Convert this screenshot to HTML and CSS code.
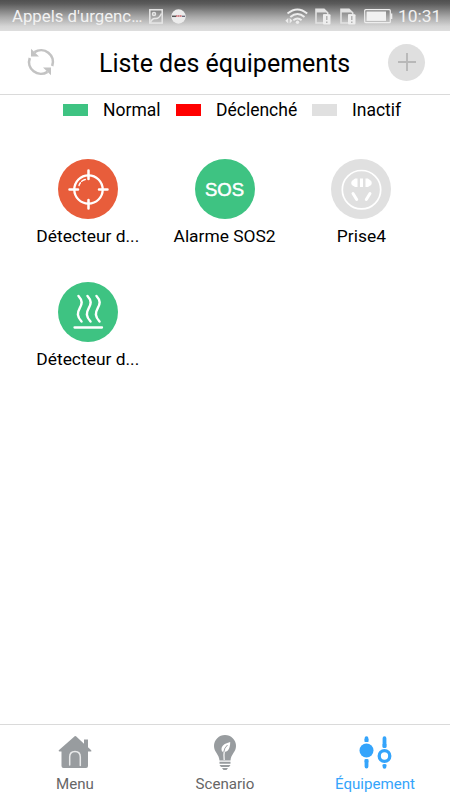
FILE: index.html
```html
<!DOCTYPE html>
<html lang="fr">
<head>
<meta charset="utf-8">
<title>Liste des équipements</title>
<link rel="stylesheet" href="styles.css">
</head>
<body>
<div class="app">
  <div class="status">
    <span class="carrier">Appels d'urgenc…</span>
    <svg class="st-pic" width="14" height="15" viewBox="0 0 14 15" fill="none" stroke="#e6e6e6" stroke-width="1.500"><rect x=".8" y=".8" width="12.400" height="13.300"/><circle cx="5" cy="5" r="1.500"/><path d="M1.500 13.500Q3 9 6.500 9.500T12.500 4.500"/></svg>
    <svg class="st-app" width="15" height="15" viewBox="0 0 15 15"><circle cx="7.500" cy="7.500" r="7.200" fill="#ececec"/><path d="M1 7.300h4" stroke="#555" stroke-width="1.500"/><path d="M5 7h6" stroke="#c8636a" stroke-width="1.500" stroke-dasharray="1.500 .4"/><path d="M11 7.300h3" stroke="#667" stroke-width="1.300"/></svg>
    <svg class="st-wifi" width="23" height="17" viewBox="0 0 23 17" fill="none" stroke="#ececec" stroke-width="1.900"><path d="M2.500 5.500Q12.500-2.600 22.200 5.500M5.300 9Q12.500 2.800 19.500 9M8.300 12.200Q12.500 8.600 16.600 12.200"/><circle cx="12.500" cy="14.300" r="1.700" fill="#ececec" stroke="none"/><path d="M3.300 10v5.400L.3 12.700zM4.600 10v5.400l2.800-2.700z" fill="#ececec" stroke="none"/></svg>
    <svg class="st-sim" width="16" height="17" viewBox="0 0 16 17"><path d="M1 1.200h8l3.700 3.600V7H9v8H1z" fill="none" stroke="#e2e2e2" stroke-width="1.600"/><path d="M1 1h8l3 3.500H1z" fill="#e2e2e2"/><rect x="8" y="6.200" width="7.500" height="10.200" rx="1" fill="#eee"/><path d="M11.800 8v4M11.800 13.500v1.500" stroke="#aaa" stroke-width="1.300"/></svg>
    <svg class="st-sim" width="16" height="17" viewBox="0 0 16 17"><path d="M1 1.200h8l3.700 3.600V7H9v8H1z" fill="none" stroke="#e2e2e2" stroke-width="1.600"/><path d="M1 1h8l3 3.500H1z" fill="#e2e2e2"/><rect x="8" y="6.200" width="7.500" height="10.200" rx="1" fill="#eee"/><path d="M11.800 8v4M11.800 13.500v1.500" stroke="#aaa" stroke-width="1.300"/></svg>
    <svg class="st-bat" width="29" height="15" viewBox="0 0 29 15"><rect x=".7" y=".7" width="25.600" height="13" rx="1" fill="none" stroke="#eee" stroke-width="1.200"/><rect x="2.500" y="2.500" width="19.500" height="9.400" fill="#f1f1f1"/><path d="M27 4.500h1.300v5.500H27z" fill="#eee"/></svg>
    <span class="clock">10:31</span>
  </div>
  <header class="header">
    <svg class="refresh" width="28" height="28" viewBox="0 0 28 28" fill="none" stroke="#c3c3c3" stroke-width="2.600"><path d="M7.500 4.200A11.800 11.800 0 0 1 25.200 18M20.500 23.800A11.800 11.800 0 0 1 2.800 10"/><path d="M4 .8V8.500H12zM24 27.200V19.500H16z" fill="#c3c3c3" stroke="none"/></svg>
    <h1 class="title">Liste des équipements</h1>
    <span class="add"><svg width="20" height="20" viewBox="0 0 20 20"><path d="M10 1v18M1 10h18" stroke="#b8b8b8" stroke-width="1.900"/></svg></span>
  </header>
  <div class="legend">
    <i class="swatch green"></i><span class="normal">Normal</span>
    <i class="swatch red"></i><span class="triggered">Déclenché</span>
    <i class="swatch gray"></i><span>Inactif</span>
  </div>
  <main class="devices">
    <div class="device">
      <svg width="60" height="60" viewBox="0 0 60 60" fill="none" stroke="#fff" stroke-linecap="round"><circle cx="30" cy="30" r="30" fill="#e85d3b" stroke="none"/><circle cx="30.500" cy="30.500" r="14.200" stroke-width="2.300"/><path d="M30.500 11.500v8.500M30.500 41v8.500M11.500 30.500H20M41 30.500h8.500" stroke-width="2.500"/><path d="M21 26.500q.4-1.500 1.400-2.800M23.700 22.300q1.700-1.400 3.600-1.800" stroke-width="1.400"/></svg>
      <span class="name">Détecteur d...</span>
    </div>
    <div class="device">
      <span class="sos">SOS</span>
      <span class="name">Alarme SOS2</span>
    </div>
    <div class="device">
      <svg width="60" height="60" viewBox="0 0 60 60"><circle cx="30" cy="30" r="30" fill="#e0e0e0"/><circle cx="30.500" cy="30.700" r="19.200" fill="none" stroke="#fff" stroke-width="1.700"/><path d="M26.500 19.600v8.500h-2.400l-3.300-2q-1.300-2 0-4.200l3.300-2.300zM34.500 19.600v8.500h2.400l3.300-2q1.300-2 0-4.200l-3.300-2.300zM29 19.600h3v8.500h-3z" fill="#fff"/><path d="M22 34.500l3.700 6M39 34.500l-3.700 6" stroke="#fff" stroke-width="3" stroke-linecap="round"/></svg>
      <span class="name">Prise4</span>
    </div>
    <div class="device">
      <svg width="60" height="60" viewBox="0 0 60 60" fill="none" stroke="#fff" stroke-linecap="round"><circle cx="30" cy="30" r="30" fill="#3ec382" stroke="none"/><path d="M20.500 14c4.500 5 3.500 8 1.300 12-2.800 5-2.800 8.500 1.700 13.500M29.500 14c4.500 5 3.500 8 1.300 12-2.800 5-2.800 8.500 1.700 13.500M38.500 14c4.500 5 3.500 8 1.300 12-2.800 5-2.800 8.500 1.700 13.500" stroke-width="2.500"/><path d="M16.500 45.500h27.500" stroke-width="2.300"/></svg>
      <span class="name">Détecteur d...</span>
    </div>
  </main>
  <nav class="tabs">
    <div class="tab">
      <svg width="34" height="36" viewBox="0 0 34 36"><path d="M17 2L.8 16.200q-.5 1.300.8 1.300H3.500v14.500q0 2 2 2h22.500q2 0 2-2V17.500h2.600q1.200 0 .6-1.300L30 13.200V5.500h-4v4.200L18 2.300z" fill="#989c9f"/><path d="M11.700 31V23q0-5.500 5.300-5.500t5.300 5.500v8.500" fill="none" stroke="#e9eaeb" stroke-width="1.500" stroke-linecap="round"/></svg>
      <span>Menu</span>
    </div>
    <div class="tab">
      <svg width="24" height="36" viewBox="0 0 24 36"><path d="M12 1A11 11 0 0 0 1 12c0 6 5 8 5.500 14.500h11C18 20 23 18 23 12A11 11 0 0 0 12 1zM6.500 27.700h11v2h-11zM6.500 31h11l-1.500 2H8zM9 34h6l-1.500 2h-3z" fill="#989c9f"/><path d="M9 17.500c-2-5 2-8 8.200-9.500 0 6-2 10-6.200 10z" fill="#fff"/><path d="M14.500 11Q10 15 11.200 26" fill="none" stroke="#f5f5f5" stroke-width="1.300"/><path d="M14.500 11Q11 14 10.800 18" fill="none" stroke="#989c9f" stroke-width=".9"/></svg>
      <span>Scenario</span>
    </div>
    <div class="tab active">
      <svg width="34" height="36" viewBox="0 0 34 36" fill="none" stroke="#34a4fb"><path d="M8.500 4.200v2M8.500 27v5.500M26.500 4.200v8M26.500 32v.8" stroke-width="3.800" stroke-linecap="round"/><path d="M8.500 5v3M8.500 25.200v3M26.500 10v3.500M26.500 30.500v1.500" stroke-width="3.800"/><circle cx="8.500" cy="16.500" r="7" fill="#34a4fb" stroke="none"/><circle cx="26.500" cy="22" r="5.300" stroke-width="3.300"/></svg>
      <span>Équipement</span>
    </div>
  </nav>
</div>
</body>
</html>
```
FILE: styles.css
```css
* { box-sizing: border-box; }
body { margin: 0; background: #fff; font-family: Roboto, "Liberation Sans", sans-serif; color: #000; }
svg { display: block; flex: none; }
.app { width: 450px; height: 800px; display: flex; flex-direction: column; overflow: hidden; }
.status { height: 31px; flex: none; display: flex; align-items: center; padding: 1px 0 0 12px; background: linear-gradient(#505050 0, #5b5b5b 12%, #a9a9a9 55%, #d5d5d5 85%, #dedede 100%); color: #f2f2f2; white-space: nowrap; }
.carrier { width: 130px; font-size: 16.8px; line-height: 30px; }
.st-pic { margin-left: 7px; }
.st-app { margin-left: 8px; }
.st-wifi { margin-left: 99px; }
.st-sim { margin-left: 7px; }
.st-sim + .st-sim { margin-left: 9px; }
.st-bat { margin-left: 8px; }
.clock { margin-left: 5px; font-size: 17.4px; line-height: 30px; }
.header { height: 64px; flex: none; display: flex; align-items: center; border-bottom: 1px solid #dadada; padding: 0 25px 0 27px; }
.refresh { margin-top: -1px; }
.title { flex: 1; margin: 2px 0 0 44px; font-size: 25px; line-height: 32px; font-weight: 400; white-space: nowrap; }
.add { width: 37px; height: 37px; margin-top: -1px; border-radius: 50%; background: #dfdfdf; display: flex; align-items: center; justify-content: center; }
.legend { height: 32px; flex: none; display: flex; align-items: center; padding-left: 63px; font-size: 17.5px; white-space: nowrap; }
.swatch { width: 25px; height: 12px; margin: -3px 15px 0 0; }
.legend span { line-height: 20px; margin-top: -2px; }
.normal { width: 73px; }
.triggered { width: 96px; }
.green { background: #3ec382; }
.red { background: #f00; }
.gray { background: #e0e0e0; }
.devices { flex: 1; display: grid; grid-template-columns: repeat(3, 136.8px); grid-auto-rows: 122.5px; padding: 32.2px 0 0 19.4px; align-content: start; }
.device { display: flex; flex-direction: column; align-items: center; }
.name { margin-top: 7px; font-size: 17.4px; line-height: 20px; white-space: nowrap; }
.sos { width: 60px; height: 60px; border-radius: 50%; background: #3ec382; color: #fff; font: 18.5px/61px "Liberation Sans", sans-serif; text-align: center; -webkit-text-stroke: .5px #fff; }
.tabs { height: 76px; flex: none; border-top: 1px solid #dadada; display: grid; grid-template-columns: repeat(3, 1fr); }
.tab { display: flex; flex-direction: column; align-items: center; padding-top: 9px; font-size: 15.1px; line-height: 20px; color: #666; }
.tab span { margin-top: 4px; }
.active { color: #34a4fb; }
```
